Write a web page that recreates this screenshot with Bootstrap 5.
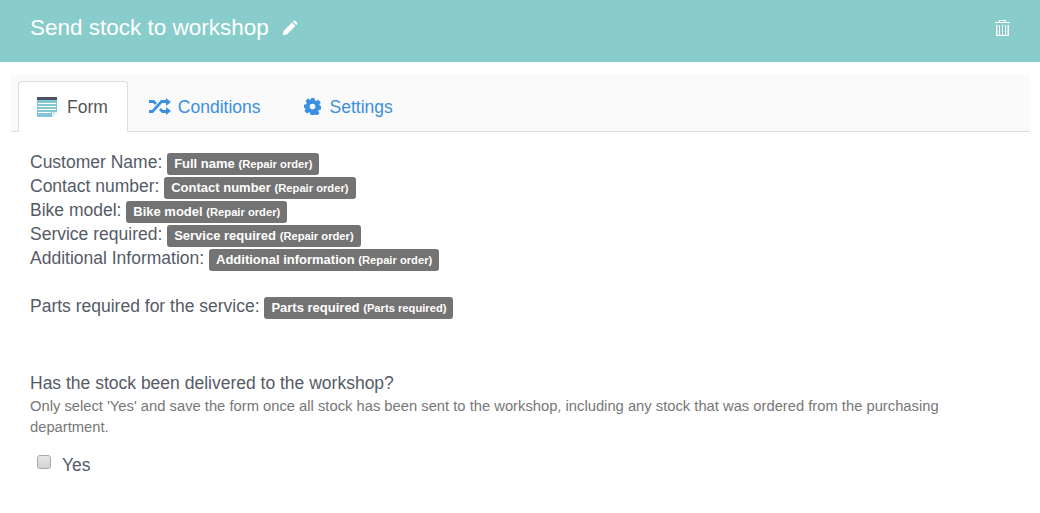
<!DOCTYPE html>
<html lang="en">
<head>
<meta charset="utf-8">
<title>Send stock to workshop</title>
<link rel="stylesheet" href="https://cdn.jsdelivr.net/npm/bootstrap@5.3.0/dist/css/bootstrap.min.css">
<style>
html,body{height:100%}
body{font-family:"Liberation Sans",Arial,sans-serif;font-size:17.5px;line-height:24px;color:#555b66;background:#fff;overflow:hidden}
.top-band{height:62px;background:#88cccb;color:#fff;padding:0 30px}
.top-title{font-size:22.5px;line-height:56px;margin:0;font-weight:400}
.trash-mark{margin-top:20px}
.tab-strip{margin:13px 10px 0 11px;background:#fafafa;height:57px;padding:6px 0 0 7px;border-bottom:1px solid #ddd}
.tab-strip .nav-link{height:51px;padding:0 21px 0 20px;font-size:17.5px;color:#3b8fe0;border-radius:4px 4px 0 0;display:flex;align-items:center;gap:6px;border:1px solid transparent}
.tab-strip .nav-link.active{color:#555;background:#fff;border-color:#ddd #ddd #fff;margin-bottom:-1px;padding:0 19px 0 18px;gap:10px}
.tab-strip .gear-tab{gap:9px}
.form-body{padding:18px 100px 0 30px}
.field-chip{background:#737373;color:#fff;font-size:13px;line-height:1;font-weight:700;padding:3px 7px 4px 7px;border-radius:3px;white-space:nowrap}
.field-chip small{font-size:11.2px;line-height:1;font-weight:700}
.gap-line{height:24px}
.question{margin-top:53px}
.hint{font-size:14.75px;line-height:21px;color:#777;margin-top:1px}
.yes-row{margin-top:15px;padding-left:7px;gap:11px;height:24px}
.yes-box{appearance:none;width:14px;height:14px;margin:0 0 6px;background:linear-gradient(#e6e6e6,#d2d2d2);border:1px solid #a8a8a8;border-radius:3px;flex:none}
.yes-label{font-size:17.5px;color:#555b66;margin:0}
</style>
</head>
<body>
<header class="top-band d-flex align-items-start justify-content-between">
<h1 class="top-title d-flex align-items-center gap-2">Send stock to workshop
<svg width="17" height="17" viewBox="0 0 20 20" fill="#fff" class="ms-1"><path d="M2 18l1-5L13 3l4 4L7 17zM14 2l1-1q1-.7 2 0l2 2q.7 1 0 2l-1 1z"/></svg>
</h1>
<svg class="trash-mark" width="15" height="16" viewBox="0 0 15 16" fill="#fff"><path d="M0 2h4V0h7v2h4v1H0zM5 2h5V1H5zM1 5h1.500v10H4V5h1v10h2V5h1v10h2V5h1v10h1.500V5H14v11H1z" fill-rule="evenodd"/></svg>
</header>
<nav class="tab-strip">
<ul class="nav">
<li class="nav-item"><a class="nav-link active" href="#">
<svg width="20" height="20" viewBox="0 0 20 20"><path fill="#85c5d8" d="M0 3h20v12l-5 5H0z"/><path fill="#4a5260" d="M0 0h20v3H0z"/><path fill="#fff" d="M1 6h18v1H1zm0 3h18v1H1zm0 3h18v1H1zm0 3h13v1H1z"/><path fill="#d9eef3" d="M15 20v-5h5z"/></svg>
Form</a></li>
<li class="nav-item"><a class="nav-link" href="#">
<svg width="23" height="17" viewBox="0 0 23 17" fill="#3b8fe0"><path d="M0 2h5l3 3-2 2-2-2H0zM0 12h3L12 2h5V0l5 4-5 4V5h-4L4 15H0zM12 10l2 2h3V9l5 4-5 4v-2h-4l-3-3z"/></svg>
Conditions</a></li>
<li class="nav-item"><a class="nav-link gear-tab" href="#">
<svg width="17" height="17" viewBox="0 0 18 18" fill="#3b8fe0"><path fill-rule="evenodd" d="M7 0h4l.5 2.500 1.500.7 2.200-1.300 2.500 2.800-1.400 2.100.6 1.500L18 8.700v3.500l-2.200.5-.7 1.500 1.300 2-2.700 2.500-2-1.300-1.500.6L9.800 18H7l-.5-2.300-1.500-.6-2 1.300-2.600-2.600 1.300-2-.6-1.500L0 10.800V7.200l2.300-.5.600-1.500-1.300-2 2.600-2.600 2 1.300 1.500-.6zm2 6a3 3 0 1 0 0 6 3 3 0 0 0 0-6z"/></svg>
Settings</a></li>
</ul>
</nav>
<main class="form-body">
<div>Customer Name: <span class="field-chip">Full name <small>(Repair order)</small></span></div>
<div>Contact number: <span class="field-chip">Contact number <small>(Repair order)</small></span></div>
<div>Bike model: <span class="field-chip">Bike model <small>(Repair order)</small></span></div>
<div>Service required: <span class="field-chip">Service required <small>(Repair order)</small></span></div>
<div>Additional Information: <span class="field-chip">Additional information <small>(Repair order)</small></span></div>
<div class="gap-line"></div>
<div>Parts required for the service: <span class="field-chip">Parts required <small>(Parts required)</small></span></div>
<div class="question">Has the stock been delivered to the workshop?</div>
<div class="hint">Only select 'Yes' and save the form once all stock has been sent to the workshop, including any stock that was ordered from the purchasing department.</div>
<div class="yes-row d-flex align-items-center">
<input type="checkbox" class="yes-box" id="yes" aria-label="Yes"><label class="yes-label" for="yes">Yes</label>
</div>
</main>
</body>
</html>
